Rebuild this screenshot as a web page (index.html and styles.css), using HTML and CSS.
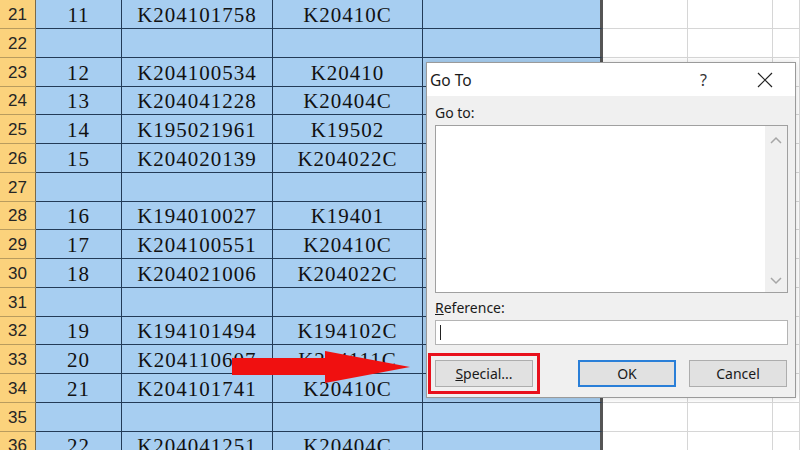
FILE: index.html
```html
<!DOCTYPE html>
<html lang="en">
<head>
    <meta charset="UTF-8">
    <title>Go To - Special</title>
    <link rel="stylesheet" href="styles.css">
</head>
<body>
    <div class="sheet">
        <div class="row"><div class="hdr">21</div><div class="c">11</div><div class="c">K204101758</div><div class="c">K20410C</div><div class="c e"></div><div class="w"></div><div class="w"></div><div class="w"></div></div>
        <div class="row"><div class="hdr">22</div><div class="c"></div><div class="c"></div><div class="c"></div><div class="c e"></div><div class="w"></div><div class="w"></div><div class="w"></div></div>
        <div class="row"><div class="hdr">23</div><div class="c">12</div><div class="c">K204100534</div><div class="c">K20410</div><div class="c e"></div><div class="w"></div><div class="w"></div><div class="w"></div></div>
        <div class="row"><div class="hdr">24</div><div class="c">13</div><div class="c">K204041228</div><div class="c">K20404C</div><div class="c e"></div><div class="w"></div><div class="w"></div><div class="w"></div></div>
        <div class="row"><div class="hdr">25</div><div class="c">14</div><div class="c">K195021961</div><div class="c">K19502</div><div class="c e"></div><div class="w"></div><div class="w"></div><div class="w"></div></div>
        <div class="row"><div class="hdr">26</div><div class="c">15</div><div class="c">K204020139</div><div class="c">K204022C</div><div class="c e"></div><div class="w"></div><div class="w"></div><div class="w"></div></div>
        <div class="row"><div class="hdr">27</div><div class="c"></div><div class="c"></div><div class="c"></div><div class="c e"></div><div class="w"></div><div class="w"></div><div class="w"></div></div>
        <div class="row"><div class="hdr">28</div><div class="c">16</div><div class="c">K194010027</div><div class="c">K19401</div><div class="c e"></div><div class="w"></div><div class="w"></div><div class="w"></div></div>
        <div class="row"><div class="hdr">29</div><div class="c">17</div><div class="c">K204100551</div><div class="c">K20410C</div><div class="c e"></div><div class="w"></div><div class="w"></div><div class="w"></div></div>
        <div class="row"><div class="hdr">30</div><div class="c">18</div><div class="c">K204021006</div><div class="c">K204022C</div><div class="c e"></div><div class="w"></div><div class="w"></div><div class="w"></div></div>
        <div class="row"><div class="hdr">31</div><div class="c"></div><div class="c"></div><div class="c"></div><div class="c e"></div><div class="w"></div><div class="w"></div><div class="w"></div></div>
        <div class="row"><div class="hdr">32</div><div class="c">19</div><div class="c">K194101494</div><div class="c">K194102C</div><div class="c e"></div><div class="w"></div><div class="w"></div><div class="w"></div></div>
        <div class="row"><div class="hdr">33</div><div class="c">20</div><div class="c">K204110607</div><div class="c">K204111C</div><div class="c e"></div><div class="w"></div><div class="w"></div><div class="w"></div></div>
        <div class="row"><div class="hdr">34</div><div class="c">21</div><div class="c">K204101741</div><div class="c">K20410C</div><div class="c e"></div><div class="w"></div><div class="w"></div><div class="w"></div></div>
        <div class="row"><div class="hdr">35</div><div class="c"></div><div class="c"></div><div class="c"></div><div class="c e"></div><div class="w"></div><div class="w"></div><div class="w"></div></div>
        <div class="row"><div class="hdr">36</div><div class="c">22</div><div class="c">K204041251</div><div class="c">K20404C</div><div class="c e"></div><div class="w"></div><div class="w"></div><div class="w"></div></div>
    </div>

    <!-- annotation arrow pointing at the Special button -->
    <svg class="arrow" width="180" height="36" viewBox="0 0 180 36">
        <polygon points="0,8 93,8 93,1 178,17 93,33 93,25 0,25" fill="#f01010"/>
    </svg>

    <div class="dialog">
        <div class="dialog-title">
            <span class="title-text">Go To</span>
            <span class="title-help">?</span>
            <svg class="title-close" width="16" height="16" viewBox="0 0 16 16">
                <path d="M1 1 L15 15 M15 1 L1 15" stroke="#222" stroke-width="1.2" fill="none"/>
            </svg>
        </div>
        <div class="dialog-body">
            <div class="field-label">Go to:</div>
            <div class="listbox">
                <div class="scrollbar">
                    <svg width="12" height="8" viewBox="0 0 12 8"><path d="M1 7 L6 2 L11 7" stroke="#a6a6a6" stroke-width="1.5" fill="none"/></svg>
                    <svg width="12" height="8" viewBox="0 0 12 8"><path d="M1 1 L6 6 L11 1" stroke="#a6a6a6" stroke-width="1.5" fill="none"/></svg>
                </div>
            </div>
            <div class="field-label ref-label"><u>R</u>eference:</div>
            <div class="textbox"><span class="caret"></span></div>
            <div class="dialog-buttons">
                <button class="btn special"><u>S</u>pecial...</button>
                <button class="btn primary">OK</button>
                <button class="btn">Cancel</button>
            </div>
        </div>
    </div>
</body>
</html>
```

FILE: styles.css
```css
body {
    margin: 0;
    width: 800px;
    height: 450px;
    overflow: hidden;
    background-color: #ffffff;
    position: relative;
}

.sheet {
    display: flex;
    flex-direction: column;
}

.row {
    display: grid;
    grid-template-columns: 36px 86px 151px 150px 180px 85px 85px 1fr;
    grid-template-rows: 100%;
    height: 29px;
    flex: none;
}

/* every fourth row one pixel shorter, averages out to the screenshot's row pitch */
.row:nth-child(4n) {
    height: 28px;
}

.row > div {
    box-sizing: border-box;
    display: flex;
    align-items: center;
    justify-content: center;
    padding-top: 1px;
    line-height: 20px;
    overflow: hidden;
}

.hdr {
    background-color: #fbd27c;
    border-right: 1px solid #7a6a4a;
    border-bottom: 1px solid #b99c5e;
    font-family: "Liberation Sans", Arial, sans-serif;
    font-size: 17px;
    color: #262626;
}

.c {
    background-color: #a7cef1;
    border-right: 1px solid #233b57;
    border-bottom: 1px solid #233b57;
    font-family: "Liberation Serif", "Times New Roman", serif;
    font-size: 21px;
    letter-spacing: 1px;
    color: #111;
}

.c.e {
    border-right: 3px solid #555;
}

.w {
    border-right: 1px solid #d6d6d6;
    border-bottom: 1px solid #d6d6d6;
}

.arrow {
    position: absolute;
    left: 232px;
    top: 350px;
}

.dialog {
    position: absolute;
    left: 426px;
    top: 62px;
    width: 370px;
    height: 336px;
    box-sizing: border-box;
    background-color: #f0f0f0;
    border: 1px solid #9a9a9a;
    box-shadow: 0 0 6px rgba(0, 0, 0, 0.15);
    font-family: "Noto Sans", "Open Sans", sans-serif;
    color: #1a1a1a;
}

.dialog-title {
    height: 33px;
    background-color: #ffffff;
    display: flex;
    align-items: center;
    padding-left: 3px;
}

.title-text {
    font-size: 15.5px;
    flex: 1;
}

.title-help {
    font-size: 16px;
    margin-right: 50px;
    color: #333;
}

.title-close {
    margin-right: 22px;
}

.dialog-body {
    padding: 7px 7px 0 8px;
}

.field-label {
    font-size: 14px;
    line-height: 20px;
}

.listbox {
    margin-top: 2px;
    height: 168px;
    box-sizing: border-box;
    background-color: #ffffff;
    border: 1px solid #a0a0a0;
    display: flex;
    justify-content: flex-end;
}

.scrollbar {
    width: 22px;
    background-color: #f0f0f0;
    display: flex;
    flex-direction: column;
    justify-content: space-between;
    align-items: center;
    padding: 10px 0 7px;
}

.ref-label {
    margin-top: 5px;
}

.textbox {
    margin-top: 2px;
    height: 25px;
    box-sizing: border-box;
    background-color: #ffffff;
    border: 1px solid #b4b4b4;
    display: flex;
    align-items: center;
    padding-left: 4px;
}

.caret {
    width: 1px;
    height: 15px;
    background-color: #222;
}

.dialog-buttons {
    display: flex;
    margin-top: 15px;
}

.btn {
    width: 98px;
    height: 27px;
    box-sizing: border-box;
    background-color: #e1e1e1;
    border: 1px solid #adadad;
    font-family: "Noto Sans", "Open Sans", sans-serif;
    font-size: 14px;
    color: #1a1a1a;
    padding: 0;
}

.btn.special {
    outline: 3px solid #e8101c;
    outline-offset: 4px;
    margin-right: 45px;
}

.btn.primary {
    border: 2px solid #2a7fd8;
    margin-right: 13px;
}
```
